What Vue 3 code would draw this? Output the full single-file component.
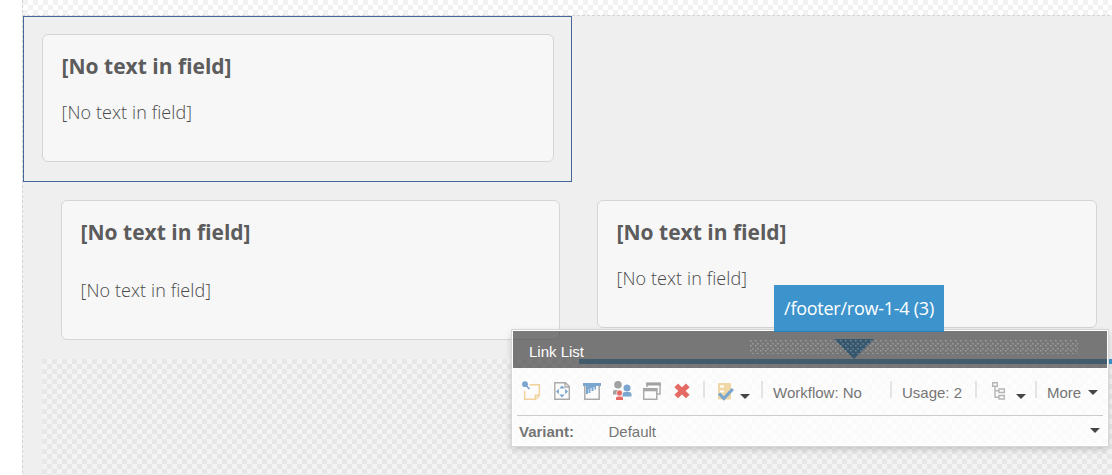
<script setup>
const cards = [
  { id: 'a', title: '[No text in field]', text: '[No text in field]' },
  { id: 'b', title: '[No text in field]', text: '[No text in field]' },
]
</script>

<template>
  <div class="page">
    <div class="strip"></div>
    <main class="canvas">
      <section class="selected">
        <article class="card first">
          <h3>[No text in field]</h3>
          <p>[No text in field]</p>
        </article>
      </section>
      <section class="row">
        <article v-for="c in cards" :key="c.id" class="card" :class="c.id">
          <h3>{{ c.title }}</h3>
          <p>{{ c.text }}</p>
        </article>
      </section>
      <div class="empty"></div>
    </main>

    <div class="line"></div>
    <div class="arrow"></div>

    <div class="toolbar">
      <header class="bar">
        <span>Link List</span>
        <svg class="grip" width="328" height="14">
          <defs>
            <pattern id="dots" width="5" height="5" patternUnits="userSpaceOnUse">
              <rect x="0" y="0" width="1" height="1" fill="#fff" fill-opacity=".3" />
              <rect x="1" y="0" width="1" height="1" fill="#fff" fill-opacity=".12" />
              <rect x="0" y="1" width="2" height="1" fill="#fff" fill-opacity=".1" />
              <rect x="2" y="3" width="1" height="1" fill="#fff" fill-opacity=".27" />
              <rect x="3" y="3" width="1" height="1" fill="#fff" fill-opacity=".17" />
              <rect x="2" y="4" width="2" height="1" fill="#fff" fill-opacity=".11" />
            </pattern>
          </defs>
          <rect width="328" height="14" fill="url(#dots)" />
        </svg>
      </header>
      <div class="tools">
        <svg class="ic note" width="20" height="20" viewBox="0 0 20 20">
          <path d="M8.500 3.700H18.300V14.500L14.500 18.300H3.700V10M18 14.300H14.300V18" fill="none" stroke="#f0d29a" stroke-width="1.500" />
          <circle cx="4" cy="3.200" r="2.900" fill="#7ba6cf" />
          <path d="M5.500 5L8.500 8" stroke="#7ba6cf" stroke-width="1.700" />
        </svg>
        <svg class="ic move" width="18" height="20" viewBox="0 0 18 20">
          <path d="M1.800 1.800H12.500L16.300 5.600V18.200H1.800ZM12 2V6H16" fill="none" stroke="#aaa" stroke-width="1.400" />
          <path d="M9 4.500L11.700 7.400H6.300ZM9 16.500L11.700 13.600H6.300ZM3 10.500L5.900 7.800V13.200ZM15 10.500L12.100 7.800V13.200Z" fill="#7ba6cf" />
        </svg>
        <svg class="ic paint" width="20" height="20" viewBox="0 0 20 20">
          <path d="M2.800 4V18.200H17.200V4" fill="none" stroke="#aaa" stroke-width="1.500" />
          <path d="M1 2H19V5H14V8.500H12.500V6H11.500V10H9.500V7H8.500V12H6.500V8H6V13H4V5H1Z" fill="#7ba6cf" />
        </svg>
        <svg class="ic people" width="20" height="20" viewBox="0 0 20 20">
          <circle cx="6" cy="3.800" r="3.800" fill="#a1a1a1" />
          <path d="M1 13.500V11Q1 9 3 9H6V13.500Z" fill="#a1a1a1" />
          <circle cx="15" cy="7" r="3.500" fill="#7ba6cf" />
          <path d="M10.500 15.500V13Q11 11 13 11H17Q19.500 11 19.500 13V15.500Z" fill="#7ba6cf" />
          <circle cx="7.500" cy="12" r="3" fill="#e66a64" stroke="#fafafa" stroke-width=".7" />
          <path d="M4 19V17Q4 15.500 6 15.500H9Q11 15.500 11 17V19Z" fill="#e66a64" />
        </svg>
        <svg class="ic windows" width="20" height="20" viewBox="0 0 20 20">
          <path d="M5 6V2.500H18V13H15" fill="none" stroke="#aaa" stroke-width="1.500" />
          <path d="M4.300 1.500H18.700V4.500H4.300ZM1 7H15.500V10.200H1Z" fill="#a1a1a1" />
          <path d="M1.700 8.500H14.800V18.200H1.700Z" fill="none" stroke="#aaa" stroke-width="1.500" />
        </svg>
        <svg class="ic del" width="18" height="20" viewBox="0 0 18 20">
          <path d="M3.200 4.300L14.800 15.500M14.800 4.300L3.200 15.500" stroke="#e66a64" stroke-width="5.200" />
        </svg>
        <i class="sep"></i>
        <svg class="ic check" width="20" height="22" viewBox="0 0 20 22">
          <rect x="2" y="2" width="13" height="16.500" rx="1" fill="#f0d8a6" />
          <path d="M4 4.500H8V6.500H4ZM4 9.500H8V11.500H4Z" fill="#fff" />
          <path d="M3 12.500L7.800 17.500L16.800 8" fill="none" stroke="#7ba6cf" stroke-width="3.200" />
        </svg>
        <i class="caret low"></i>
        <i class="sep"></i>
        <span>Workflow: No</span>
        <i class="sep"></i>
        <span>Usage: 2</span>
        <i class="sep"></i>
        <svg class="ic tree" width="15" height="20" viewBox="0 0 15 20">
          <path d="M1.700 1.700H6.300V5.300H1.700ZM8 8H13.300V11.500H8ZM8 14.500H13.300V18H8ZM4 5.300V16.200H8M4 9.700H8" fill="none" stroke="#b5b5b5" stroke-width="1.400" />
        </svg>
        <i class="caret low"></i>
        <i class="sep"></i>
        <span>More</span>
        <i class="caret mid"></i>
      </div>
      <div class="variant">
        <b>Variant:</b>
        <span>Default</span>
        <i class="caret"></i>
      </div>
    </div>

    <div class="tag">/footer/row-1-4 (3)</div>
  </div>
</template>

<style>
body { background: #fff; overflow: hidden; }
</style>

<style scoped>
* { box-sizing: border-box; }
.page {
  position: relative;
  width: 1112px;
  height: 475px;
  padding-left: 22px;
  overflow: hidden;
  font-family: "Open Sans", sans-serif;
  color: #5c5c5c;
}
.page::before {
  content: "";
  position: absolute;
  left: 22px;
  top: 0;
  width: 1px;
  height: 475px;
  background: repeating-linear-gradient(#d3d3d3 0 3px, #f3f3f3 3px 5px);
  z-index: 1;
}
.strip {
  height: 16px;
  background: repeating-conic-gradient(#fff 0 25%, #f2f2f2 0 50%) 1px 0 / 10px 10px;
  position: relative;
}
.strip::after {
  content: "";
  position: absolute;
  left: 0;
  right: 0;
  bottom: 0;
  height: 1px;
  background: repeating-linear-gradient(90deg, #d3d3d3 0 3px, #f3f3f3 3px 5px);
}
.canvas { height: 459px; background: #efefef; padding-left: 1px; }
.selected { width: 549px; height: 166px; border: 1px solid #47669a; padding: 17px 17px 0 18px; }
.card {
  background: #f7f7f7;
  border: 1px solid #d5d5d5;
  border-radius: 6px;
  padding: 16px 18.600px;
}
.card.first { height: 128px; }
.row { display: flex; align-items: flex-start; gap: 37px; padding: 18px 0 0 38px; height: 177px; }
.card.a { width: 499px; height: 140px; }
.card.b { width: 500px; height: 128px; }
h3 { margin: 0; font-size: 21px; line-height: 30px; font-weight: 700; white-space: nowrap; }
p { margin: 18px 0 0; font-size: 18px; line-height: 26px; font-weight: 300; letter-spacing: .1px; color: #4a4a4a; white-space: nowrap; }
.card.a p { margin-top: 30px; }
.empty {
  margin-left: 19px;
  height: 116px;
  background: repeating-conic-gradient(#f3f3f3 0 25%, #e7e7e7 0 50%) 0 0 / 10px 10px;
}
.line { position: absolute; left: 579px; top: 359px; width: 533px; height: 5px; background: #3d94cc; }
.arrow {
  position: absolute;
  left: 834px;
  top: 339px;
  border: 20px solid transparent;
  border-top: 20px solid #1580cc;
  border-bottom: 0;
}
.tag {
  position: absolute;
  left: 774px;
  top: 285px;
  width: 170px;
  height: 47px;
  background: #3d94cc;
  border-bottom: 1px solid #2380bd;
  color: #fff;
  font-size: 18px;
  line-height: 47px;
  letter-spacing: -.25px;
  text-align: center;
  white-space: nowrap;
}
.toolbar {
  position: absolute;
  left: 512px;
  top: 330px;
  width: 596px;
  height: 116px;
  border: 1px solid #fff;
  box-shadow: 0 0 0 1px #d6d6d6, 0 3px 7px rgba(0, 0, 0, .2);
  font-family: "Liberation Sans", Arial, sans-serif;
  font-size: 15px;
  color: #757575;
}
.bar {
  height: 37px;
  background: rgba(68, 68, 68, .7);
  color: #fff;
  display: flex;
  align-items: center;
  padding: 4px 0 0 16px;
  position: relative;
}
.grip { position: absolute; left: 237px; top: 9px; }
.tools {
  display: grid;
  grid-template-columns: 32px 29px 30px 30px 31px 30px 13px 24px 21px 12px 117px 12px 73px 16px 25px 19px 12px 41px 10px;
  align-items: start;
  height: 48px;
  padding: 13px 0 0 8px;
  background: linear-gradient(#ccc, #ccc) 4px 100% / 586px 1px no-repeat, rgba(255, 255, 255, .8);
}
.tools span { line-height: 24px; white-space: nowrap; }
.sep { width: 2px; height: 17px; background: #e4e4e4; }
.caret { width: 10px; height: 5px; border: 5px solid transparent; border-top-color: #454545; border-bottom: 0; }
.caret.low { margin-top: 13px; }
.caret.mid { margin-top: 9px; }
.variant { display: flex; height: 29px; align-items: center; padding: 2px 7px 0 6px; background: rgba(255, 255, 255, .8); }
.variant b { width: 89.500px; }
.variant .caret { margin: -2px 0 0 auto; }
</style>
